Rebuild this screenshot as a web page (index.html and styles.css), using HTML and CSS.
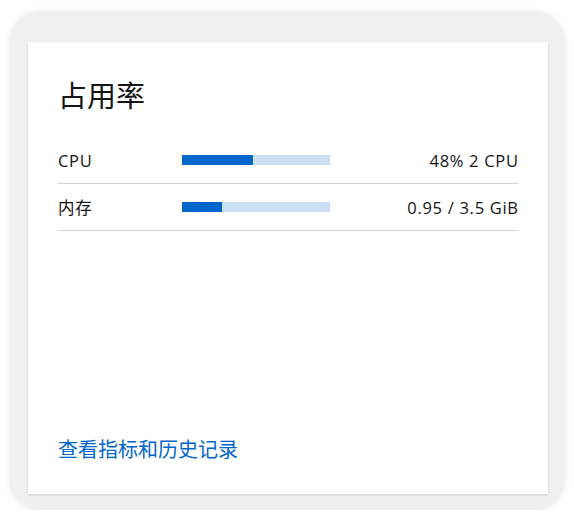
FILE: index.html
```html
<!DOCTYPE html>
<html lang="zh">
<head>
<meta charset="utf-8">
<link rel="stylesheet" href="styles.css">
</head>
<body>
<div class="frame">
  <div class="card">
    <h2 class="title">占用率</h2>
    <div class="rows">
      <div class="row">
        <span class="label">CPU</span>
        <div class="bar"><div class="fill" style="width:48%"></div></div>
        <span class="value">48% 2 CPU</span>
      </div>
      <div class="row">
        <span class="label">内存</span>
        <div class="bar"><div class="fill" style="width:27%"></div></div>
        <span class="value">0.95 / 3.5 GiB</span>
      </div>
    </div>
    <a class="link" href="#">查看指标和历史记录</a>
  </div>
</div>
</body>
</html>
```

FILE: styles.css
```css
html, body {
  margin: 0;
  padding: 0;
  background: #ffffff;
}
body {
  font-family: "Open Sans", "Noto Sans CJK SC", sans-serif;
  color: #151515;
}
.frame {
  box-sizing: border-box;
  margin: 12px 10px 0 10px;
  width: 554px;
  height: 498px;
  background: #f0f0f0;
  border-radius: 30px;
  box-shadow: 0 0 6px rgba(0, 0, 0, 0.10);
  padding: 30px 16px 16px 18px;
}
.card {
  box-sizing: border-box;
  height: 452px;
  background: #ffffff;
  box-shadow: 0 1px 2px rgba(0, 0, 0, 0.16);
  padding: 33px 30px 30px 30px;
  display: flex;
  flex-direction: column;
}
.title {
  margin: 0;
  font-family: "Noto Sans CJK SC", sans-serif;
  font-weight: 400;
  font-size: 29px;
  line-height: 38px;
}
.rows {
  margin-top: 24px;
  display: flex;
  flex-direction: column;
}
.row {
  display: grid;
  grid-template-columns: 124px 148px 1fr;
  align-items: center;
  height: 46px;
  border-bottom: 1px solid #d2d2d2;
  font-size: 16.5px;
  letter-spacing: 0.7px;
}
.bar {
  height: 10px;
  background: #cbdff4;
  display: flex;
}
.fill {
  background: #0066cc;
  height: 100%;
}
.value {
  text-align: right;
  margin-right: -0.7px;
}
.link {
  margin-top: auto;
  font-family: "Noto Sans CJK SC", sans-serif;
  font-size: 20px;
  line-height: 30px;
  color: #0066cc;
  text-decoration: none;
}
```
